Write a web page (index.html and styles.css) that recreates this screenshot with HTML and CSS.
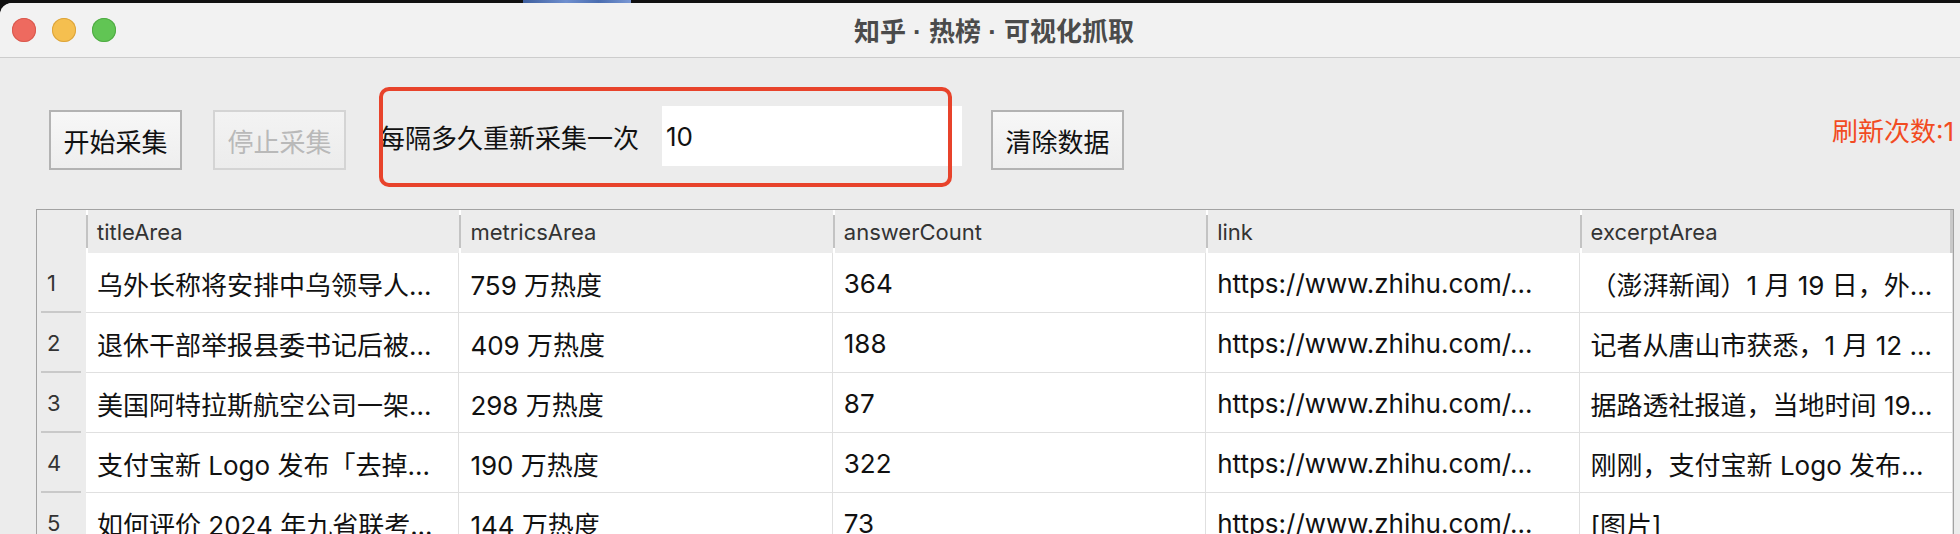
FILE: index.html
```html
<!DOCTYPE html>
<html lang="zh-CN">
<head>
<meta charset="utf-8">
<title>知乎 · 热榜 · 可视化抓取</title>
<link rel="stylesheet" href="styles.css">
</head>
<body>
<div class="desk">
  <div class="desk-strip"><span class="desk-blue"></span></div>
  <div class="window">
    <header class="titlebar">
      <div class="lights">
        <span class="light red"></span>
        <span class="light yellow"></span>
        <span class="light green"></span>
      </div>
      <div class="title">知乎 · 热榜 · 可视化抓取</div>
    </header>
    <div class="toolbar">
      <button class="btn">开始采集</button>
      <button class="btn disabled">停止采集</button>
      <div class="interval">
        <span class="interval-label">每隔多久重新采集一次</span>
        <span class="interval-input">10</span>
        <span class="annot"></span>
      </div>
      <button class="btn">清除数据</button>
      <div class="refresh">刷新次数:1</div>
    </div>
    <div class="table">
      <div class="hcell corner"></div>
      <div class="hcell">titleArea</div>
      <div class="hcell">metricsArea</div>
      <div class="hcell">answerCount</div>
      <div class="hcell">link</div>
      <div class="hcell last">excerptArea</div>

      <div class="rnum">1</div>
      <div class="cell">乌外长称将安排中乌领导人...</div>
      <div class="cell">759 万热度</div>
      <div class="cell">364</div>
      <div class="cell">https://www.zhihu.com/...</div>
      <div class="cell">（澎湃新闻）1 月 19 日，外...</div>

      <div class="rnum">2</div>
      <div class="cell">退休干部举报县委书记后被...</div>
      <div class="cell">409 万热度</div>
      <div class="cell">188</div>
      <div class="cell">https://www.zhihu.com/...</div>
      <div class="cell">记者从唐山市获悉，1 月 12 ...</div>

      <div class="rnum">3</div>
      <div class="cell">美国阿特拉斯航空公司一架...</div>
      <div class="cell">298 万热度</div>
      <div class="cell">87</div>
      <div class="cell">https://www.zhihu.com/...</div>
      <div class="cell">据路透社报道，当地时间 19...</div>

      <div class="rnum">4</div>
      <div class="cell">支付宝新 Logo 发布「去掉...</div>
      <div class="cell">190 万热度</div>
      <div class="cell">322</div>
      <div class="cell">https://www.zhihu.com/...</div>
      <div class="cell">刚刚，支付宝新 Logo 发布...</div>

      <div class="rnum">5</div>
      <div class="cell">如何评价 2024 年九省联考...</div>
      <div class="cell">144 万热度</div>
      <div class="cell">73</div>
      <div class="cell">https://www.zhihu.com/...</div>
      <div class="cell">[图片]</div>
    </div>
  </div>
</div>
</body>
</html>
```

FILE: styles.css
```css
* { box-sizing: border-box; }
html, body { margin: 0; padding: 0; }
body {
  width: 1960px;
  height: 534px;
  overflow: hidden;
  background: #111;
  font-family: "Inter", "Noto Sans CJK SC", sans-serif;
  color: #111;
}
.desk { display: flex; flex-direction: column; height: 534px; }
.desk-strip {
  height: 3px;
  display: flex;
  padding-left: 523px;
}
.desk-blue { width: 108px; height: 3px; background: linear-gradient(90deg, #3e5f9e, #6f8fcf 40%, #4a6db0 70%, #7a98d4); }
.window {
  flex: 1;
  background: #ececec;
  border-top-left-radius: 12px;
  overflow: hidden;
  display: flex;
  flex-direction: column;
}
.titlebar {
  height: 55px;
  flex: none;
  background: #f2f2f2;
  border-bottom: 1px solid #cdcdcd;
  display: flex;
  align-items: center;
  position: relative;
}
.lights {
  display: flex;
  gap: 16px;
  padding-left: 12px;
  position: absolute;
  left: 0;
  top: 15px;
}
.light { width: 24px; height: 24px; border-radius: 50%; display: block; }
.light.red { background: #ee6a5f; box-shadow: inset 0 0 0 1px #d95a4f; }
.light.yellow { background: #f5bf4f; box-shadow: inset 0 0 0 1px #dca43c; }
.light.green { background: #61c554; box-shadow: inset 0 0 0 1px #50ab44; }
.title {
  flex: 1;
  text-align: center;
  font-family: "Liberation Sans", "Noto Sans CJK SC", sans-serif;
  font-weight: bold;
  font-size: 26px;
  color: #4b4b4b;
  padding-left: 28px;
  padding-bottom: 2px;
}
.toolbar {
  height: 151px;
  flex: none;
  display: flex;
  align-items: flex-start;
  padding-left: 49px;
  padding-right: 6px;
}
.btn {
  margin-top: 52px;
  width: 133px;
  height: 60px;
  border: 2px solid #b3b3b3;
  background: linear-gradient(#f7f7f7, #eeeeee);
  font-family: "Inter", "Noto Sans CJK SC", sans-serif;
  font-size: 26px;
  color: #111;
  padding: 0;
  margin-right: 31px;
}
.btn.disabled { border-color: #d4d4d4; color: #b9b9b9; background: linear-gradient(#f3f3f3, #ececec); margin-right: 33px; }
.interval {
  position: relative;
  display: flex;
  align-items: center;
  margin-top: 48px;
  margin-right: 29px;
}
.interval-label {
  font-size: 26px;
  color: #111;
  width: 283px;
}
.interval-input {
  width: 300px;
  height: 60px;
  background: #fff;
  font-size: 26px;
  padding-left: 4px;
  display: flex;
  align-items: center;
}
.annot {
  position: absolute;
  left: 0;
  top: -19px;
  width: 573px;
  height: 100px;
  border: 4px solid #e8432b;
  border-radius: 10px;
}
.refresh {
  margin-left: auto;
  margin-top: 59px;
  font-size: 26px;
  color: #f24b22;
  line-height: 30px;
}
.table {
  margin-left: 36px;
  width: 1918px;
  border: 1px solid #a2a2a2;
  border-bottom: none;
  display: grid;
  grid-template-columns: 49px repeat(5, 1fr);
  grid-auto-rows: 60px;
  grid-template-rows: 43px;
  background: #fff;
}
.hcell {
  background: #ececec;
  font-size: 22px;
  color: #333;
  display: flex;
  align-items: center;
  padding-left: 9px;
  position: relative;
  border-left: 2px solid transparent;
  background-clip: padding-box;
}
.hcell::before {
  content: "";
  position: absolute;
  left: -2px;
  top: 5px;
  bottom: 5px;
  width: 2px;
  background: #c3c3c3;
}
.hcell.corner::before { display: none; }
.hcell.corner { border-left: none; }
.hcell.last { border-right: 3px solid #c8c8c8; }
.rnum {
  background: #ececec;
  font-size: 22px;
  color: #333;
  display: flex;
  align-items: center;
  padding-left: 10px;
  position: relative;
}
.rnum::after {
  content: "";
  position: absolute;
  left: 4px;
  right: 5px;
  bottom: 0;
  height: 2px;
  background: #c9c9c9;
}
.cell {
  font-size: 26px;
  color: #111;
  display: flex;
  align-items: center;
  padding-left: 11px;
  padding-top: 1px;
  white-space: nowrap;
  overflow: hidden;
  border-right: 1px solid #e0e0e0;
  border-bottom: 1px solid #e0e0e0;
}
```
